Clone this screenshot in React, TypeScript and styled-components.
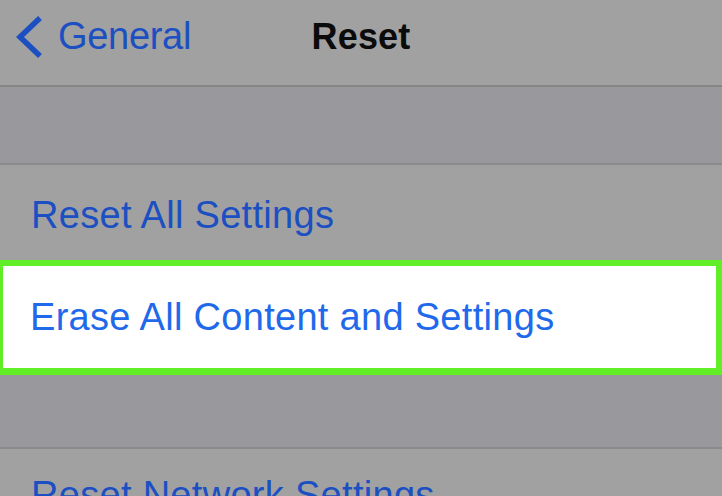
import React from "react";
import styled, { createGlobalStyle } from "styled-components";

const Global = createGlobalStyle`
  html, body { margin: 0; padding: 0; background: #99989d; }
  body { font-family: "Liberation Sans", Arial, sans-serif; overflow: hidden; }
  #root { width: 722px; height: 496px; overflow: hidden; }
`;

const Screen = styled.div`
  width: 722px;
  height: 496px;
  display: flex;
  flex-direction: column;
  overflow: hidden;
  background: #99989d;
`;

const NavBar = styled.div`
  height: 73px;
  flex: none;
  display: grid;
  grid-template-columns: 1fr auto 1fr;
  align-items: center;
  padding-bottom: 12px;
  background: #a1a1a1;
  border-bottom: 2px solid #868686;
`;

const Back = styled.div`
  display: flex;
  align-items: center;
  gap: 14px;
  padding-left: 14px;
  color: #1b4fc2;
  font-size: 38px;
  letter-spacing: -0.3px;
`;

const Title = styled.div`
  font-size: 36px;
  font-weight: 700;
  color: #0b0b0b;
  letter-spacing: 0.2px;
`;

const Spacer = styled.div<{ $h: number }>`
  height: ${(p) => p.$h}px;
  flex: none;
  background: #99989d;
  border-bottom: 2px solid #8a898e;
`;

const Row = styled.div<{ $h: number }>`
  height: ${(p) => p.$h}px;
  flex: none;
  box-sizing: border-box;
  display: flex;
  align-items: center;
  padding: 6px 0 0 31px;
  background: #a1a1a1;
  color: #1b4fc2;
  font-size: 38px;
  letter-spacing: 0.3px;
  white-space: nowrap;
`;

const Highlight = styled.div`
  height: 102px;
  flex: none;
  display: flex;
  align-items: center;
  padding-left: 27px;
  background: #ffffff;
  border-style: solid;
  border-color: #62ee26;
  border-width: 6px 6px 7px 3px;
  color: #1f69ea;
  font-size: 38px;
  letter-spacing: 0.3px;
  white-space: nowrap;
`;

const LastRow = styled(Row)`
  align-items: flex-start;
  padding-top: 25px;
`;

const Chevron = () => (
  <svg width="30" height="44" viewBox="0 0 30 44">
    <polyline
      points="26,3 6,22 26,41"
      fill="none"
      stroke="#1b4fc2"
      strokeWidth="5.5"
      strokeLinecap="butt"
      strokeLinejoin="miter"
    />
  </svg>
);

export default function App() {
  return (
    <Screen>
      <Global />
      <NavBar>
        <Back>
          <Chevron />
          <span>General</span>
        </Back>
        <Title>Reset</Title>
        <div />
      </NavBar>
      <Spacer $h={76} />
      <Row $h={95}>Reset All Settings</Row>
      <Highlight>Erase All Content and Settings</Highlight>
      <Spacer $h={72} />
      <LastRow $h={95}>Reset Network Settings</LastRow>
    </Screen>
  );
}
